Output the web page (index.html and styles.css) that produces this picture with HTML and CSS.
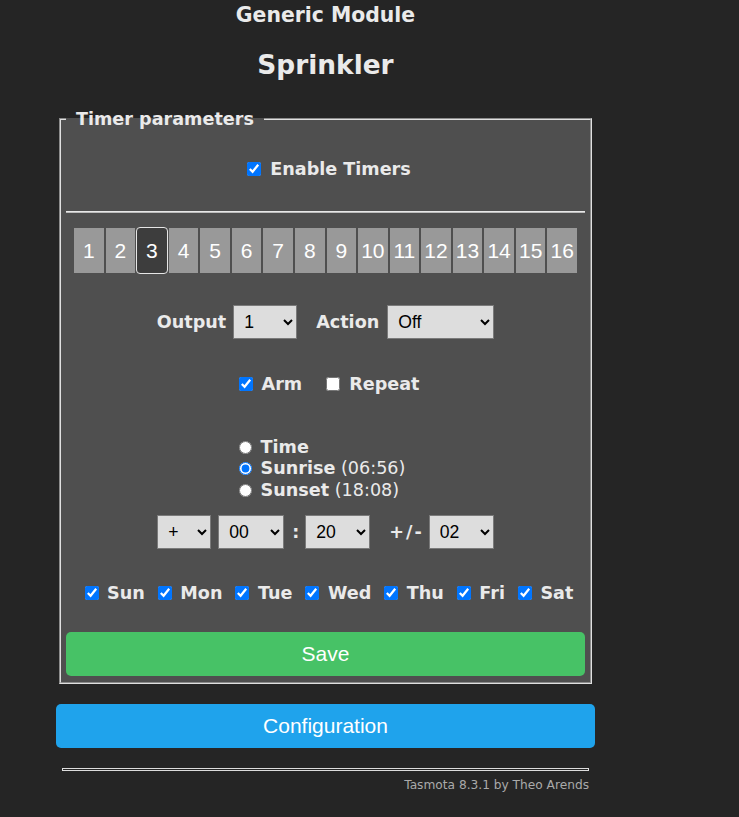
FILE: index.html
```html
<!DOCTYPE html>
<html>
<head>
<meta charset="utf-8">
<title>Sprinkler - Timer</title>
<link rel="stylesheet" href="styles.css">
</head>
<body>
<div class="page">
  <h3 class="module">Generic Module</h3>
  <h2 class="device">Sprinkler</h2>
  <fieldset class="timer">
    <legend class="legend">Timer parameters</legend>
    <div class="enable">
      <input type="checkbox" class="cb" checked><b>Enable Timers</b>
    </div>
    <hr class="sep">
    <div class="tabs">
      <button class="tab">1</button><button class="tab">2</button><button class="tab on">3</button><button class="tab">4</button><button class="tab">5</button><button class="tab">6</button><button class="tab">7</button><button class="tab">8</button><button class="tab">9</button><button class="tab">10</button><button class="tab">11</button><button class="tab">12</button><button class="tab">13</button><button class="tab">14</button><button class="tab">15</button><button class="tab">16</button>
    </div>
    <div class="out-row">
      <b class="lbl-out">Output</b>
      <select class="sel w-out"><option>1</option></select>
      <b class="lbl-act">Action</b>
      <select class="sel w-act"><option>Off</option></select>
    </div>
    <div class="arm-row">
      <input type="checkbox" class="cb" checked><b class="arm-lbl">Arm</b>
      <input type="checkbox" class="cb"><b>Repeat</b>
    </div>
    <div class="radios">
      <label class="rad"><input type="radio" name="m" class="rb"><b>Time</b></label>
      <label class="rad"><input type="radio" name="m" class="rb" checked><span><b>Sunrise</b> (06:56)</span></label>
      <label class="rad"><input type="radio" name="m" class="rb"><span><b>Sunset</b> (18:08)</span></label>
    </div>
    <div class="time-row">
      <select class="sel w-sign"><option>+</option></select>
      <select class="sel w-hh"><option>00</option></select>
      <b class="colon">:</b>
      <select class="sel w-mm"><option>20</option></select>
      <b class="pm">+/-</b>
      <select class="sel w-win"><option>02</option></select>
    </div>
    <div class="days">
      <span class="day"><input type="checkbox" class="cb" checked><b>Sun</b></span>
      <span class="day"><input type="checkbox" class="cb" checked><b>Mon</b></span>
      <span class="day"><input type="checkbox" class="cb" checked><b>Tue</b></span>
      <span class="day"><input type="checkbox" class="cb" checked><b>Wed</b></span>
      <span class="day"><input type="checkbox" class="cb" checked><b>Thu</b></span>
      <span class="day"><input type="checkbox" class="cb" checked><b>Fri</b></span>
      <span class="day"><input type="checkbox" class="cb" checked><b>Sat</b></span>
    </div>
    <button class="btn save">Save</button>
  </fieldset>
  <button class="btn cfg">Configuration</button>
  <hr class="foot-rule">
  <div class="footer">Tasmota 8.3.1 by Theo Arends</div>
</div>
</body>
</html>
```
FILE: styles.css
```css
body {
  margin: 0;
  background: #252525;
  color: #eaeaea;
  font-family: "DejaVu Sans", Verdana, sans-serif;
  font-size: 17.6px;
}
.page {
  width: 539px;
  margin-left: 56px;
}
.module {
  margin: 3px 0 0;
  font-size: 20.4px;
  line-height: 24px;
  text-align: center;
}
.device {
  margin: 22px 0 0;
  font-size: 26.4px;
  line-height: 32px;
  text-align: center;
}
.timer {
  margin: 27px 3px 0;
  padding: 0 5px 6px;
  border: 2px groove #e0e0e0;
  background: #4f4f4f;
  min-width: 0;
}
.legend {
  padding: 0 10px;
  font-weight: bold;
  line-height: 22px;
}
.cb {
  width: 14px;
  height: 14px;
  margin: 0 9px 0 0;
}
.enable {
  display: flex;
  justify-content: center;
  align-items: center;
  padding: 28px 0 0 7px;
  line-height: 22px;
}
.sep {
  margin: 31px 0 0;
  border: 0;
  border-top: 1px solid #e8e8e8;
  height: 1px;
  background: #bdbdbd;
}
.tabs {
  display: flex;
  margin: 14px 7px 0;
}
.tab {
  box-sizing: border-box;
  flex: 0 0 6.25%;
  width: 6.25%;
  height: 47px;
  padding: 0;
  border: 1px solid #4f4f4f;
  border-radius: 0;
  background: #999999;
  color: #ffffff;
  font: 21px "Liberation Sans", Arial, sans-serif;
}
.tab.on {
  background: #3d3d3d;
  border-color: #e6e6e6;
  border-radius: 4px;
}
.out-row {
  display: flex;
  justify-content: center;
  align-items: center;
  margin-top: 31px;
  height: 34px;
}
.sel {
  box-sizing: border-box;
  height: 34px;
  padding: 0 0 0 6px;
  background: #dddddd;
  color: #000000;
  border: 1px solid #7a7a7a;
  border-radius: 0;
  font: 17.6px "Liberation Sans", Arial, sans-serif;
}
.lbl-out { margin-right: 7px; }
.w-out { width: 64px; margin-right: 19px; }
.lbl-act { margin-right: 8px; }
.w-act { width: 107px; }
.arm-row {
  display: flex;
  justify-content: center;
  align-items: center;
  margin-top: 34px;
  line-height: 22px;
  padding-left: 7px;
}
.arm-lbl { margin-right: 24px; }
.radios {
  display: flex;
  flex-direction: column;
  align-items: flex-start;
  width: fit-content;
  margin: 41.5px auto 0;
  padding-right: 7px;
}
.rad {
  display: flex;
  align-items: center;
  line-height: 21.5px;
}
.rb {
  width: 13px;
  height: 13px;
  margin: 0 9px 0 0;
}
.time-row {
  display: flex;
  justify-content: center;
  align-items: center;
  margin-top: 14px;
  height: 34px;
}
.w-sign { width: 54px; margin-right: 7px; }
.w-hh { width: 66px; }
.colon { margin: 0 6px 0 8px; }
.w-mm { width: 65px; }
.pm { margin: 0 5px 0 19px; letter-spacing: 2px; }
.w-win { width: 65px; }
.days {
  display: flex;
  justify-content: center;
  align-items: center;
  margin-top: 33px;
  line-height: 22px;
  padding-left: 7px;
}
.day {
  display: flex;
  align-items: center;
  margin-right: 13px;
}
.day:last-child { margin-right: 0; }
.days .cb { margin-right: 8.5px; }
.btn {
  display: block;
  width: 100%;
  height: 44px;
  padding: 0;
  border: 0;
  border-radius: 5px;
  color: #ffffff;
  font: 21px "Liberation Sans", Arial, sans-serif;
}
.save {
  margin-top: 28px;
  background: #47c266;
}
.cfg {
  margin-top: 20px;
  background: #1fa3ec;
}
.foot-rule {
  margin: 20px 6px 0;
  height: 1px;
  border: 1px solid #dddddd;
  background: transparent;
}
.footer {
  margin-top: 6px;
  padding-right: 6px;
  text-align: right;
  font-size: 12.2px;
  line-height: 16px;
  color: #aaaaaa;
}
```
